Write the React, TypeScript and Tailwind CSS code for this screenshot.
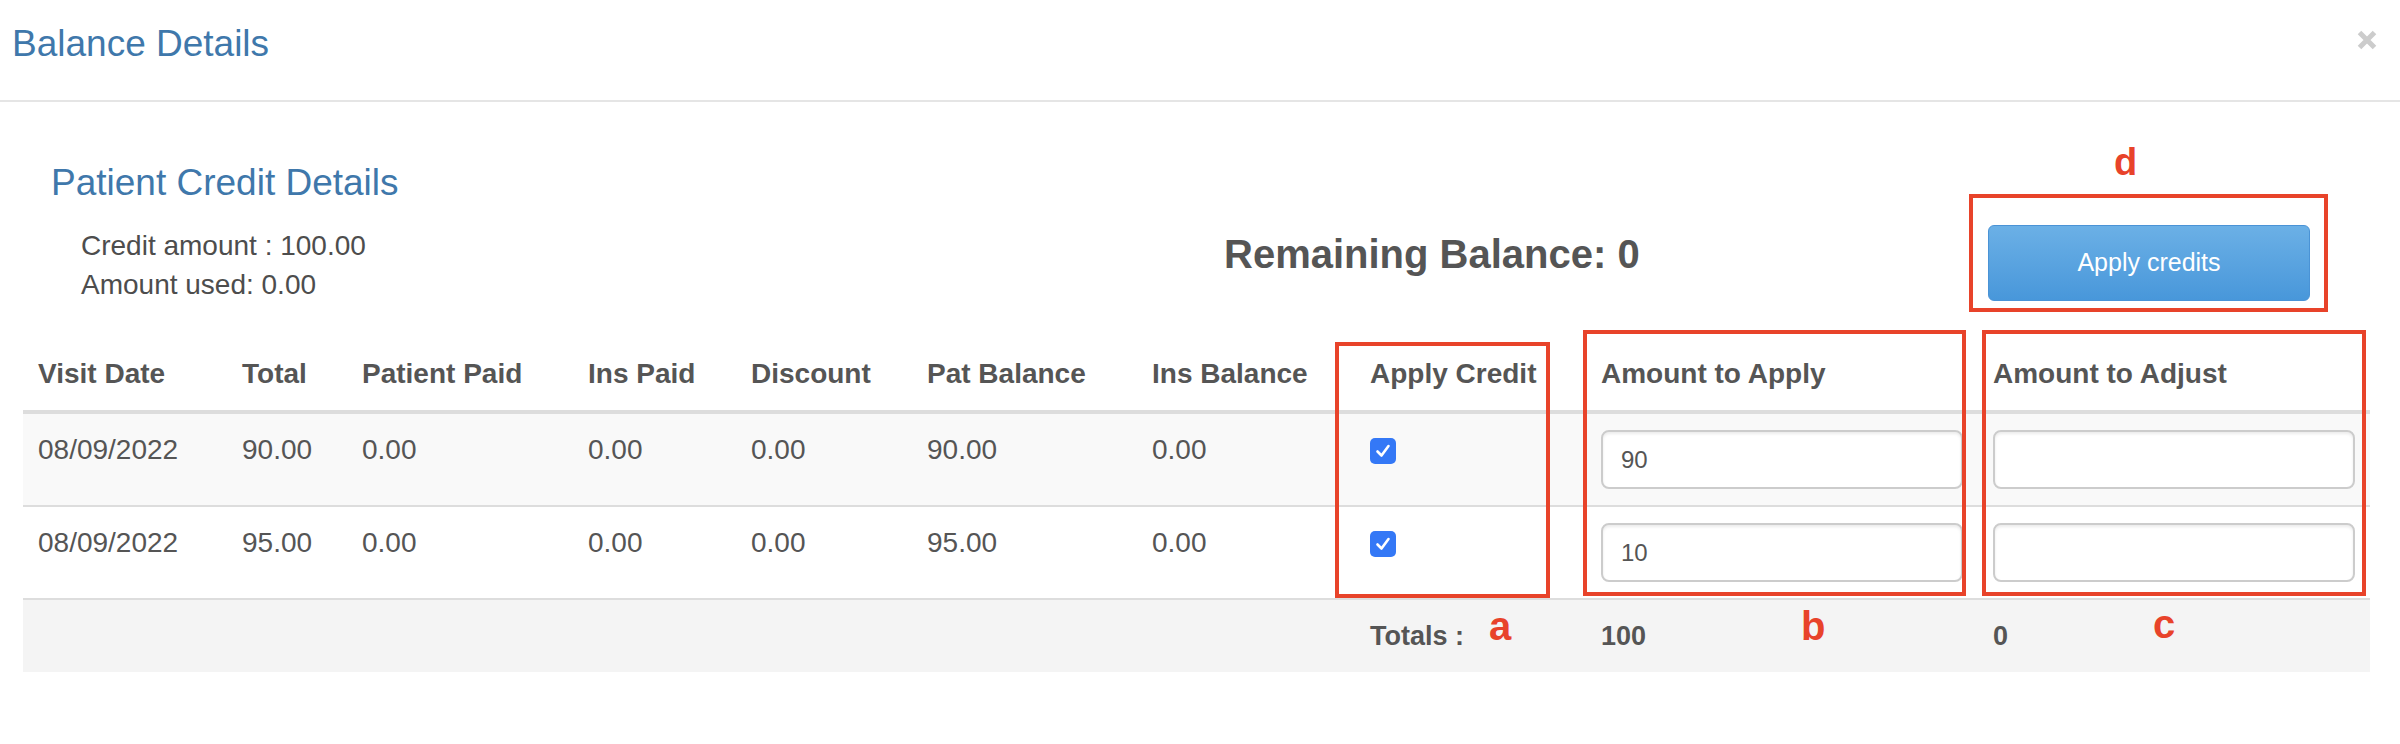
import React from 'react';

const cols =
  'grid grid-cols-[204px_120px_226px_163px_176px_225px_218px_231px_392px_392px]';

const headers = [
  'Visit Date',
  'Total',
  'Patient Paid',
  'Ins Paid',
  'Discount',
  'Pat Balance',
  'Ins Balance',
  'Apply Credit',
  'Amount to Apply',
  'Amount to Adjust',
];

const rows = [
  { date: '08/09/2022', total: '90.00', patPaid: '0.00', insPaid: '0.00', discount: '0.00', patBal: '90.00', insBal: '0.00', apply: '90' },
  { date: '08/09/2022', total: '95.00', patPaid: '0.00', insPaid: '0.00', discount: '0.00', patBal: '95.00', insBal: '0.00', apply: '10' },
];

function CheckBox() {
  return (
    <span className="mt-[8px] flex h-[26px] w-[26px] items-center justify-center rounded-[5px] bg-[#3478f6]">
      <svg width="18" height="18" viewBox="0 0 18 18" fill="none">
        <path d="M3.5 9.5 L7.5 13.5 L14.5 4" stroke="white" strokeWidth="2.6" strokeLinecap="round" strokeLinejoin="round" />
      </svg>
    </span>
  );
}

function AmountInput({ value }: { value: string }) {
  return (
    <input
      readOnly
      value={value}
      className="h-[59px] w-full rounded-[8px] border-2 border-[#cccccc] bg-white px-[18px] text-[24px] text-[#555555] shadow-[inset_0_2px_3px_rgba(0,0,0,0.08)] outline-none"
    />
  );
}

export default function App() {
  const cell = 'px-[15px] py-[16px]';

  return (
    <div className="relative min-h-[744px] w-[2400px] bg-white font-['Liberation_Sans',Arial,sans-serif] text-[#555555]">
      {/* modal header */}
      <div className="flex h-[102px] items-start justify-between border-b-2 border-[#e5e5e5] pl-[12px] pr-[23px] pt-[24px]">
        <h4 className="text-[37px] leading-[40px] text-[#3f78ab]">Balance Details</h4>
        <svg className="mt-[6px]" width="20" height="20" viewBox="0 0 20 20">
          <path d="M2.5 2.5 L17.5 17.5 M17.5 2.5 L2.5 17.5" stroke="#cccccc" strokeWidth="5" />
        </svg>
      </div>

      {/* summary */}
      <div className="flex items-start pt-[61px]">
        <div className="w-[1224px] pl-[51px]">
          <h3 className="text-[37px] leading-[40px] text-[#3f78ab]">Patient Credit Details</h3>
          <div className="mt-[23px] pl-[30px] text-[28px] leading-[39px] text-[#4d4d4d]">
            <div>Credit amount : 100.00</div>
            <div>Amount used: 0.00</div>
          </div>
        </div>
        <div className="w-[764px] pt-[68px] text-[40px] font-bold leading-[46px]">Remaining Balance: 0</div>
        <div className="pt-[62px]">
          <button className="h-[76px] w-[322px] rounded-[6px] border border-[#4a93d6] bg-linear-to-b from-[#6bb0e6] to-[#4897da] text-[25px] text-white">
            Apply credits
          </button>
        </div>
      </div>

      {/* table */}
      <div className="ml-[23px] mt-[34px] w-[2347px]">
        <div className={`${cols} border-b-4 border-[#dddddd] text-[28px] font-bold leading-[40px]`}>
          {headers.map((h) => (
            <div key={h} className={cell}>{h}</div>
          ))}
        </div>

        {rows.map((r, i) => (
          <div
            key={i}
            className={`${cols} border-b-2 border-[#dddddd] text-[28px] leading-[40px] ${i === 0 ? 'bg-[#f9f9f9]' : 'bg-white'}`}
          >
            <div className={cell}>{r.date}</div>
            <div className={cell}>{r.total}</div>
            <div className={cell}>{r.patPaid}</div>
            <div className={cell}>{r.insPaid}</div>
            <div className={cell}>{r.discount}</div>
            <div className={cell}>{r.patBal}</div>
            <div className={cell}>{r.insBal}</div>
            <div className={cell}><CheckBox /></div>
            <div className={cell}><AmountInput value={r.apply} /></div>
            <div className={cell}><AmountInput value="" /></div>
          </div>
        ))}

        <div className={`${cols} bg-[#f4f4f4] text-[27px] font-bold leading-[40px]`}>
          <div className={`${cell} col-start-8`}>Totals :</div>
          <div className={cell}>100</div>
          <div className={cell}>0</div>
        </div>
      </div>

      {/* red annotations */}
      <div className="absolute left-[1335px] top-[342px] h-[256px] w-[215px] border-4 border-[#e8432a]" />
      <div className="absolute left-[1583px] top-[330px] h-[266px] w-[383px] border-4 border-[#e8432a]" />
      <div className="absolute left-[1982px] top-[330px] h-[266px] w-[384px] border-4 border-[#e8432a]" />
      <div className="absolute left-[1969px] top-[194px] h-[118px] w-[359px] border-4 border-[#e8432a]" />
      <span className="absolute left-[1489px] top-[606px] text-[40px] font-bold leading-none text-[#e8432a]">a</span>
      <span className="absolute left-[1801px] top-[606px] text-[40px] font-bold leading-none text-[#e8432a]">b</span>
      <span className="absolute left-[2153px] top-[604px] text-[40px] font-bold leading-none text-[#e8432a]">c</span>
      <span className="absolute left-[2114px] top-[143px] text-[38px] font-bold leading-none text-[#e8432a]">d</span>
    </div>
  );
}
